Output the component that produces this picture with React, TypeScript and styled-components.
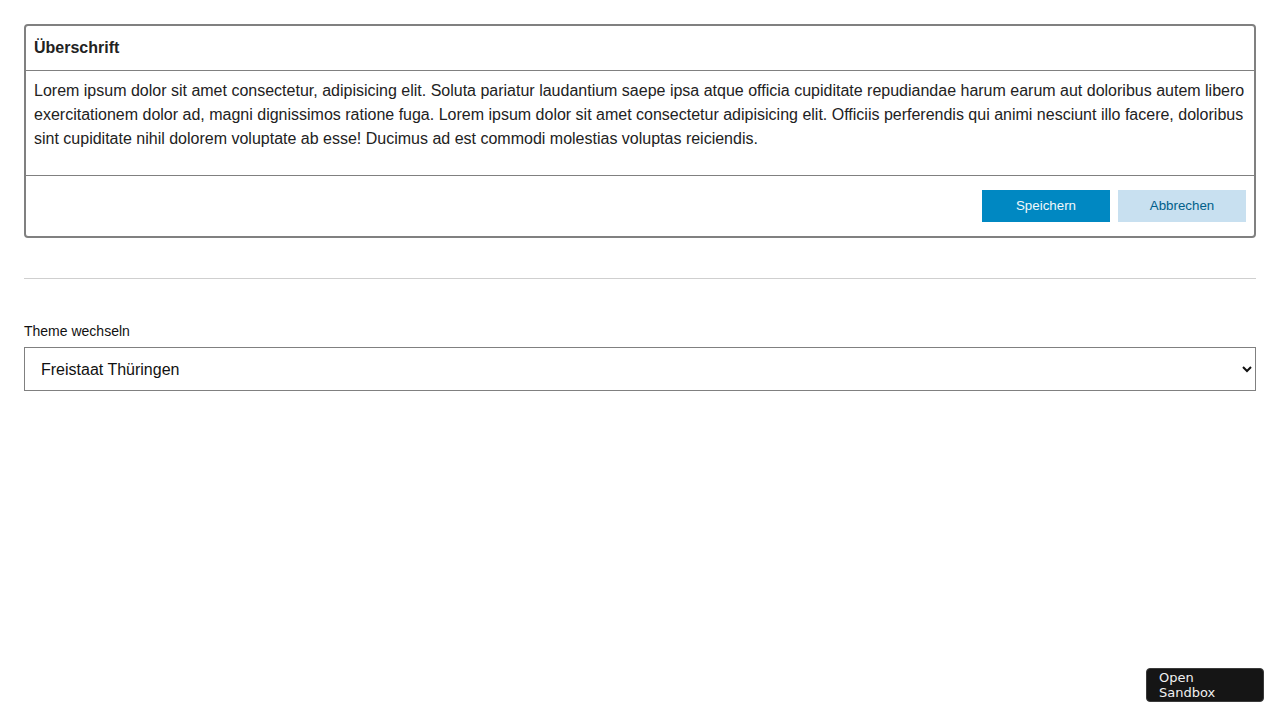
import React from 'react';
import styled, { createGlobalStyle } from 'styled-components';

const GlobalStyle = createGlobalStyle`
  body {
    margin: 0;
    background: #fff;
    font-family: "Liberation Sans", Arial, sans-serif;
    color: #222;
  }
`;

const Page = styled.div`
  padding: 24px;
`;

const Card = styled.section`
  border: 2px solid #808080;
  border-radius: 4px;
  display: flex;
  flex-direction: column;
`;

const CardHeader = styled.header`
  padding: 10px 8px;
  font-size: 16px;
  line-height: 24px;
  font-weight: bold;
  border-bottom: 1px solid #808080;
`;

const CardBody = styled.div`
  padding: 8px 8px 24px;
  font-size: 16px;
  line-height: 24px;
  border-bottom: 1px solid #808080;
`;

const CardFooter = styled.footer`
  height: 60px;
  padding: 0 8px;
  display: flex;
  align-items: center;
  justify-content: flex-end;
  gap: 8px;
`;

const Button = styled.button<{ $secondary?: boolean }>`
  width: 128px;
  height: 32px;
  padding: 0 0 1px;
  border: none;
  font-family: "Liberation Sans", Arial, sans-serif;
  font-size: 13.33px;
  cursor: pointer;
  background: ${({ $secondary }) => ($secondary ? '#c8e0f0' : '#0088c2')};
  color: ${({ $secondary }) => ($secondary ? '#005f8a' : '#f2f8fb')};
`;

const Divider = styled.hr`
  margin: 40px 0 44px;
  border: none;
  border-top: 1px solid #cfcfcf;
`;

const Label = styled.label`
  display: block;
  font-size: 14px;
  line-height: 16px;
  margin-bottom: 8px;
  color: #111;
`;

const Select = styled.select`
  width: 100%;
  height: 44px;
  border: 1px solid #808080;
  border-radius: 0;
  padding: 0 12px;
  font-family: "Liberation Sans", Arial, sans-serif;
  font-size: 16px;
  color: #111;
  background: #fff;
`;

const SandboxButton = styled.button`
  position: fixed;
  right: 16px;
  bottom: 18px;
  width: 118px;
  height: 34px;
  padding: 0 12px;
  text-align: left;
  background: #151515;
  color: #f0f0f0;
  border: 1px solid #3a3a3a;
  border-radius: 4px;
  font-family: "DejaVu Sans", sans-serif;
  font-size: 13px;
  line-height: 15px;
`;

export default function App() {
  return (
    <>
      <GlobalStyle />
      <Page>
        <Card>
          <CardHeader>Überschrift</CardHeader>
          <CardBody>
            Lorem ipsum dolor sit amet consectetur, adipisicing elit. Soluta pariatur laudantium saepe ipsa atque
            officia cupiditate repudiandae harum earum aut doloribus autem libero exercitationem dolor ad, magni
            dignissimos ratione fuga. Lorem ipsum dolor sit amet consectetur adipisicing elit. Officiis perferendis
            qui animi nesciunt illo facere, doloribus sint cupiditate nihil dolorem voluptate ab esse! Ducimus ad est
            commodi molestias voluptas reiciendis.
          </CardBody>
          <CardFooter>
            <Button>Speichern</Button>
            <Button $secondary>Abbrechen</Button>
          </CardFooter>
        </Card>
        <Divider />
        <Label htmlFor="theme">Theme wechseln</Label>
        <Select id="theme" defaultValue="th">
          <option value="th">Freistaat Thüringen</option>
        </Select>
      </Page>
      <SandboxButton>Open Sandbox</SandboxButton>
    </>
  );
}
